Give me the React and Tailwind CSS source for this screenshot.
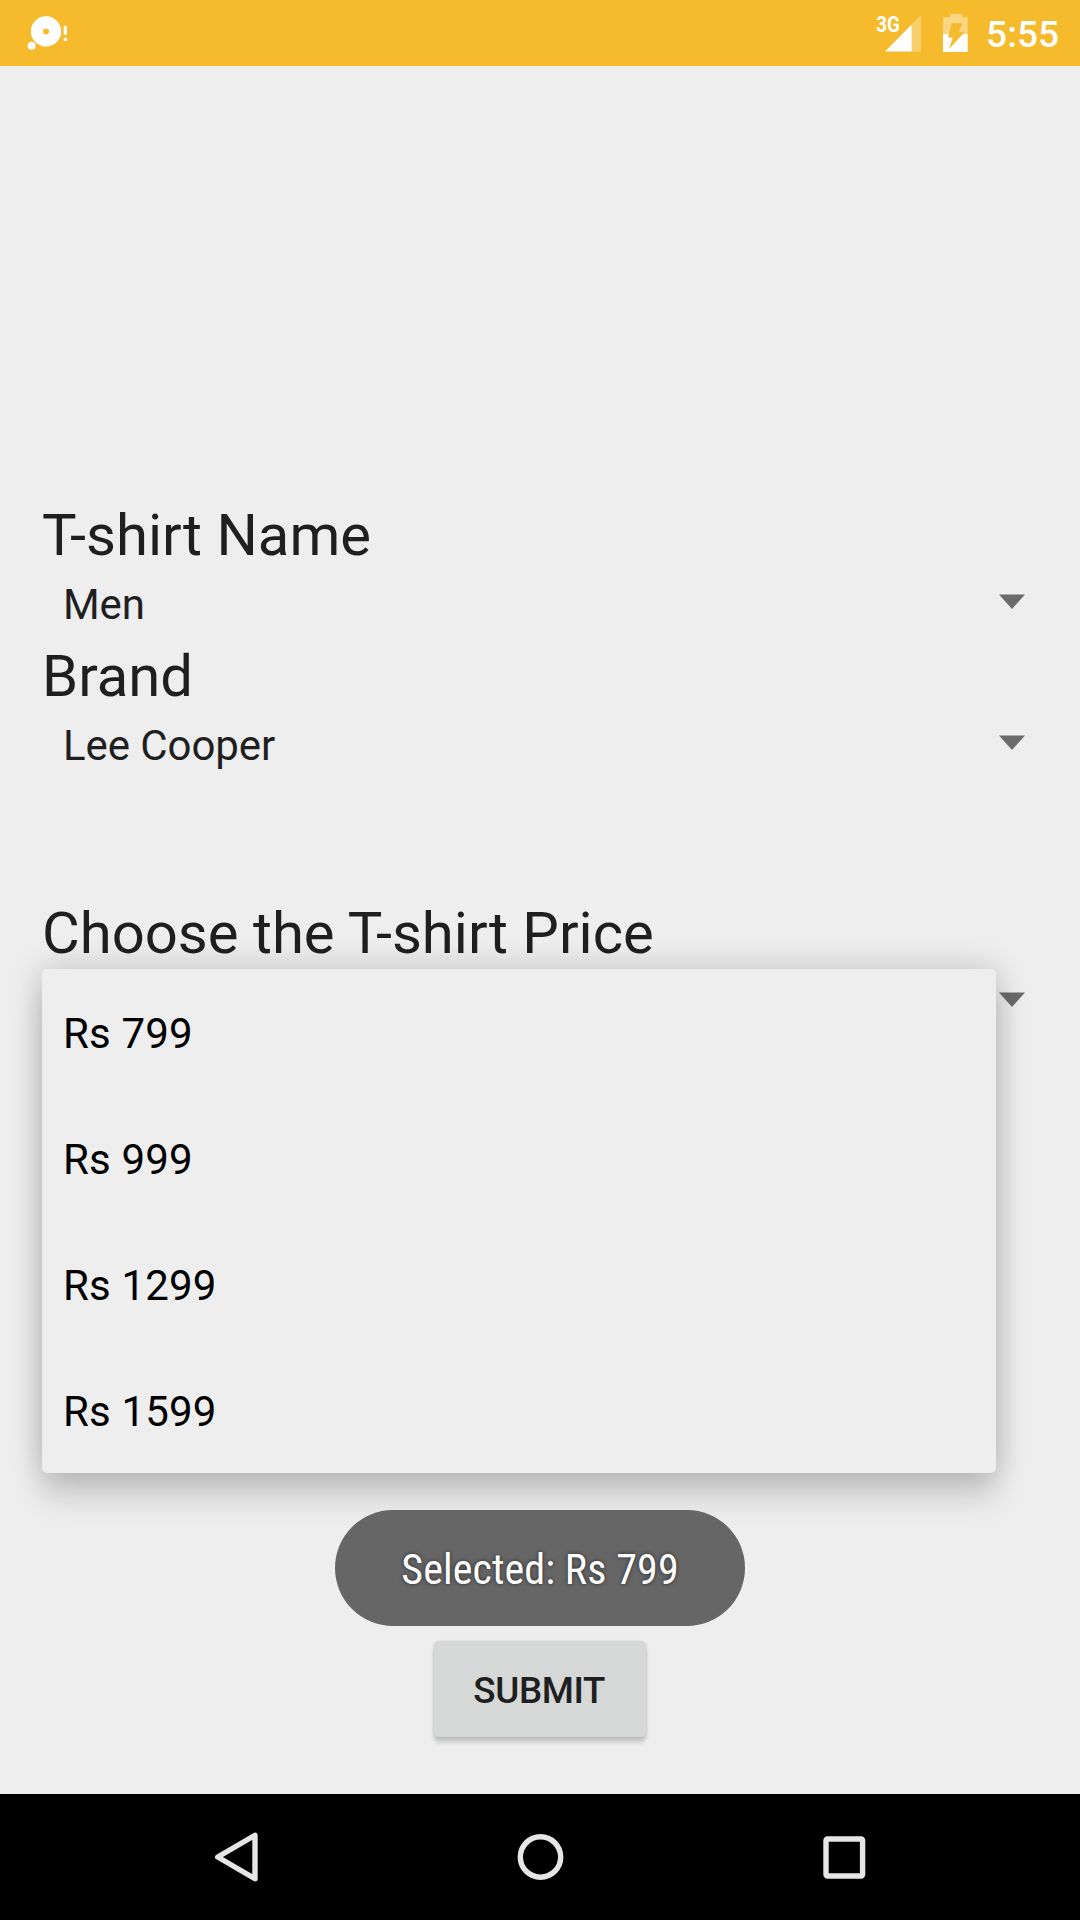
const prices = ['Rs 799', 'Rs 999', 'Rs 1299', 'Rs 1599'];

function StatusBar() {
  return (
    <header className="flex h-[66px] items-center justify-between bg-[#f5bb2d] text-white">
      <svg width="80" height="66" fill="#fff">
        <path fillRule="evenodd" d="M46 16.300a15.100 15.100 0 1 1 0 30.200a15.100 15.100 0 1 1 0-30.200zM46 28.600a3 3 0 1 0 0 6a3 3 0 1 0 0-6z" />
        <circle cx="31.600" cy="45.800" r="4" />
        <rect x="63.700" y="25.800" width="3.200" height="9" />
        <rect x="63.700" y="37.800" width="3.200" height="3.200" />
      </svg>
      <div className="flex h-full pr-[21px]">
        <svg width="116" height="66" fill="#fff">
          <path opacity=".3" d="M51 15v36.500H41.700V24.500z" />
          <path d="M41.700 24.500v27H15z" />
          <text x="6.300" y="31.500" fontFamily="Roboto" fontSize="22" fontWeight="700" textLength="23.500" lengthAdjust="spacingAndGlyphs">3G</text>
          <path opacity=".4" d="M80 14h12.300v3.300h5.400V34h-4.800l1.600-1.700h-6l4.200-9h-11L78.900 34H73V17.300h7z" />
          <path d="M73 34h5.900l-.9 3.500h4.700L79 49l13.900-15h4.800v18H73z" />
        </svg>
        <span className="flex h-full w-[73px] items-center whitespace-nowrap pt-[2px] text-[37px] font-medium leading-none tracking-[0.1px]">5:55</span>
      </div>
    </header>
  );
}

function Spinner({ label, value }) {
  return (
    <section className="h-[141px]">
      <h2 className="h-[78px] text-[58px] leading-[78px]">{label}</h2>
      <div className="flex h-[63px] items-start justify-between pl-[21px] pr-[13px]">
        <span className="text-[42px] leading-[61px] tracking-[-0.08px]">{value}</span>
        <svg width="26" height="15" className="mt-[20px]" fill="#6b6b6b">
          <path d="M0 .5h26L13 15z" />
        </svg>
      </div>
    </section>
  );
}

function PriceMenu() {
  return (
    <ul className="absolute left-[42px] top-[969px] w-[954px] rounded-[5px] bg-[#eeeeee] text-black shadow-[0_26px_30px_rgba(0,0,0,0.13),0_0_32px_rgba(0,0,0,0.2)]">
      {prices.map((price) => (
        <li key={price} className="h-[126px] pl-[21px] text-[42px] leading-[129px] tracking-[0.15px]">{price}</li>
      ))}
    </ul>
  );
}

function NavBar() {
  return (
    <nav className="flex h-[126px] items-center justify-between bg-black px-[207px]">
      <svg width="58" height="58" fill="none" stroke="#e6e6e6" strokeWidth="5.400" strokeLinejoin="round">
        <path d="M48 7.300v43.400L10.700 29z" />
      </svg>
      <svg width="58" height="58" fill="none" stroke="#e6e6e6" strokeWidth="5.400">
        <circle cx="29.500" cy="29" r="20.200" />
      </svg>
      <svg width="58" height="58" fill="none" stroke="#e6e6e6" strokeWidth="5.400">
        <rect x="11" y="11" width="36.600" height="37" rx="1.500" />
      </svg>
    </nav>
  );
}

export default function App() {
  return (
    <div className="relative flex h-[1920px] w-[1080px] flex-col overflow-hidden bg-[#eeeeee] font-['Roboto',sans-serif] text-[#1f1f1f]">
      <StatusBar />
      <main className="flex flex-1 flex-col px-[42px] pt-[430px]">
        <Spinner label="T-shirt Name" value="Men" />
        <Spinner label="Brand" value="Lee Cooper" />
        <div className="pt-[116px]">
          <Spinner label="Choose the T-shirt Price" value="" />
        </div>
        <button className="mt-[606px] h-[96px] w-[212px] self-center rounded-[5px] bg-[#d6d8d7] pr-[1.5px] pt-[4px] text-[36.75px] font-medium leading-none tracking-[-0.35px] shadow-[0_5px_4px_rgba(0,0,0,0.18),0_0_3px_rgba(0,0,0,0.12)]">SUBMIT</button>
      </main>
      <NavBar />
      <PriceMenu />
      <div className="absolute left-[335px] top-[1510px] flex h-[116px] w-[410px] items-center justify-center rounded-full bg-[#666666] pt-[4px]">
        <span className="whitespace-nowrap font-['Roboto_Condensed','Roboto'] text-[42px] leading-none tracking-[0.1px] text-white [font-stretch:75%] [text-shadow:0_0_4px_rgba(0,0,0,0.6)]">Selected: Rs 799</span>
      </div>
    </div>
  );
}
